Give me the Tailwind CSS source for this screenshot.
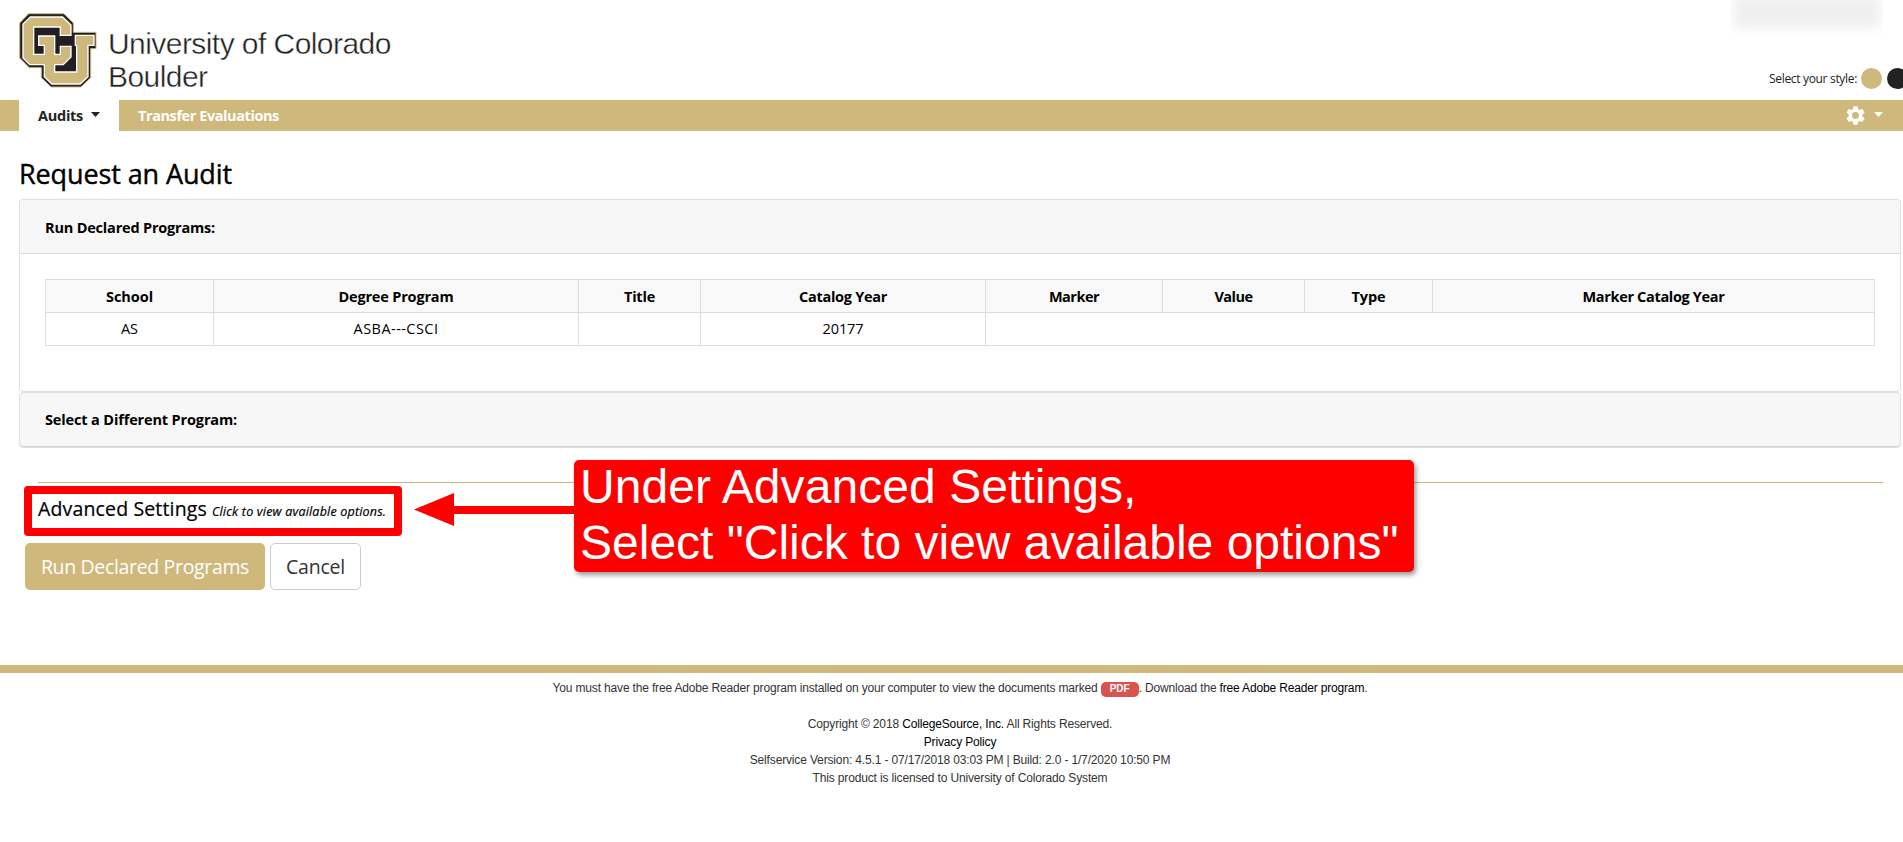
<!DOCTYPE html>
<html lang="en">
<head>
<meta charset="utf-8">
<title>Request an Audit</title>
<script src="https://cdn.jsdelivr.net/npm/@tailwindcss/browser@4"></script>
</head>
<body class="relative h-[842px] overflow-hidden bg-white font-['Open_Sans','Noto_Sans',sans-serif] text-black">
<header class="flex h-[100px] justify-between overflow-hidden pl-[19px]">
  <div class="flex pt-[13px]">
    <svg class="h-[75px] w-[78px]" viewBox="57 39 234 225">
      <path d="M86 41H192L220 69V97H288V146H272V233L243 261H153L124 233V203H88L59 174V69Z" fill="#231f20" stroke="#cfb87c" stroke-width="3"/>
      <g stroke="#ffffff" stroke-width="8" fill="#cfb87c">
        <path d="M92 53H187L211 76V104H183V79H99V165H135V134H118V110H162V165H183V141H211V170L189 192H90L71 173V73Z"/>
        <path d="M135 165H162V218H232V134H228V108H280V134H262V229L240 250H156L135 229Z"/>
      </g>
      <g fill="#cfb87c"><path d="M92 53H187L211 76V104H183V79H99V165H135V134H118V110H162V165H183V141H211V170L189 192H90L71 173V73Z"/><path d="M135 165H162V218H232V134H228V108H280V134H262V229L240 250H156L135 229Z"/></g>
    </svg>
    <div class="pt-[14px] pl-[11px] font-['Liberation_Sans',sans-serif] text-[30px] leading-[33px] tracking-[-0.56px] text-[#231f20] [-webkit-text-stroke:0.4px_white]">
      <div>University of Colorado</div><div>Boulder</div>
    </div>
  </div>
  <div class="relative w-[173px]">
    <div class="h-9 w-[153px] overflow-hidden"><div class="-mt-1 ml-1 h-[32px] w-[146px] bg-[#efefef] blur-[6px]"></div></div>
    <div class="absolute top-[68px] left-[39px] flex w-[160px] items-center">
      <span class="w-[92px] text-xs leading-5 tracking-[-0.32px] whitespace-nowrap text-[#222]">Select your style:</span>
      <span class="size-[21px] shrink-0 rounded-full bg-[#cfb87c]"></span>
      <span class="ml-[5px] size-[21px] shrink-0 rounded-full bg-[#222]"></span>
    </div>
  </div>
</header>
<nav class="flex h-[31px] bg-[#cfb87c] pl-[19px] text-[14.5px] leading-[31px] font-bold">
  <div class="flex w-[100px] items-center bg-white pl-[19px] tracking-[-0.27px] text-[#222]"><span class="w-[45px]">Audits</span>
    <svg class="mb-[2px] ml-2 h-[5px] w-[9px]" viewBox="0 0 9 5"><path d="M0 0H9L4.500 5Z" fill="#222"/></svg></div>
  <div class="pl-[19px] tracking-[-0.42px] text-white">Transfer Evaluations</div>
  <div class="ml-auto flex items-center pr-5">
    <svg class="size-[23px]" viewBox="0 0 24 24" fill="#fff"><path d="M19.14 12.94c.04-.3.06-.61.06-.94s-.02-.64-.07-.94l2.030-1.580a.49.49 0 0 0 .12-.61l-1.920-3.320a.49.49 0 0 0-.59-.22l-2.390.96a7 7 0 0 0-1.620-.94l-.36-2.540A.48.48 0 0 0 13.920 2.400h-3.840a.48.48 0 0 0-.47.410l-.36 2.540c-.59.24-1.130.570-1.620.940l-2.390-.96a.49.49 0 0 0-.59.220L2.740 8.870a.48.48 0 0 0 .12.610l2.030 1.580c-.05.3-.09.63-.09.94s.02.64.07.94l-2.030 1.580a.49.49 0 0 0-.12.610l1.920 3.320c.12.22.37.29.59.22l2.390-.96c.5.38 1.030.7 1.620.94l.36 2.540c.05.24.24.41.48.41h3.840c.24 0 .44-.17.47-.41l.36-2.540c.59-.24 1.130-.56 1.620-.94l2.390.96c.22.08.47 0 .59-.22l1.920-3.320a.48.48 0 0 0-.12-.61zM12 15.600a3.600 3.600 0 1 1 0-7.200 3.600 3.600 0 0 1 0 7.200z"/></svg>
    <svg class="mb-[2px] ml-[7px] h-[5px] w-[9px]" viewBox="0 0 9 5"><path d="M0 0H9L4.500 5Z" fill="#fff"/></svg>
  </div>
</nav>
<main class="h-[534px] pt-[23px] pl-[19px]">
  <h1 class="h-[45px] text-[27px] leading-[40px] font-medium tracking-[-0.11px] [-webkit-text-stroke:0.4px_black]">Request an Audit</h1>
  <section class="h-[193px] w-[1882px] rounded border border-[#dfdfdf]">
    <h2 class="h-[54px] rounded-t border-b border-[#d8d8d8] bg-[#f7f7f7] pl-[25px] text-[14.5px] leading-[55px] font-bold tracking-[-0.19px]">Run Declared Programs:</h2>
    <table class="mt-[25px] ml-[25px] w-[1830px] table-fixed border-collapse text-center text-[14.5px] leading-5 [&_td]:border [&_td]:border-[#ddd] [&_th]:border [&_th]:border-[#ddd] [&_th]:pt-[2px]">
      <colgroup><col class="w-[168px]"><col class="w-[365px]"><col class="w-[122px]"><col class="w-[285px]"><col class="w-[177px]"><col class="w-[142px]"><col class="w-[128px]"><col></colgroup>
      <tr class="h-[33px] bg-[#f9f9f9]"><th class="tracking-[-0.06px]">School</th><th class="tracking-[-0.17px]">Degree Program</th><th class="tracking-[-0.22px]">Title</th><th class="tracking-[-0.28px]">Catalog Year</th><th class="tracking-[-0.5px]">Marker</th><th class="tracking-[-0.5px]">Value</th><th class="tracking-[-0.1px]">Type</th><th class="tracking-[-0.33px]">Marker Catalog Year</th></tr>
      <tr class="h-[33px]"><td>AS</td><td class="tracking-[0.45px]">ASBA---CSCI</td><td></td><td class="tracking-[-0.09px]">20177</td><td colspan="4"></td></tr>
    </table>
  </section>
  <section class="h-[56px] w-[1882px] rounded border border-[#dfdfdf]">
    <h2 class="h-[54px] rounded border-b border-[#d0d0d0] bg-[#f7f7f7] pl-[25px] text-[14.5px] leading-[54px] font-bold tracking-[-0.14px]">Select a Different Program:</h2>
  </section>
  <div class="mt-[34px] ml-[19px] h-[61px] w-[1845px] border-t border-[#cfb87c] pt-[12px]">
    <div class="flex items-baseline text-[19.5px] leading-[28px] [-webkit-text-stroke:0.2px_black]"><span class="tracking-[0.15px]">Advanced Settings</span><em class="ml-[5px] text-[12.5px] tracking-[0.2px]">Click to view available options.</em></div>
  </div>
  <div class="ml-[6px] flex gap-[5px] text-[19.5px]">
    <button class="h-[47px] w-[240px] rounded-[5px] bg-[#cfb87c] tracking-[-0.34px] text-white">Run Declared Programs</button>
    <button class="h-[47px] w-[91px] rounded-[5px] border border-[#ccc] bg-white tracking-[-0.22px] text-[#333]">Cancel</button>
  </div>
</main>
<footer class="border-t-8 border-[#cfb87c] pt-[6px] pl-[17px] text-center font-['Liberation_Sans',sans-serif] text-xs leading-[18px] tracking-[-0.15px] text-[#333]">
  <p class="mb-[18px] h-[18px] tracking-[-0.165px]">You must have the free Adobe Reader program installed on your computer to view the documents marked <span class="mt-[3px] inline-block h-[15px] w-[38px] rounded-[5px] bg-[#d9534f] align-top text-[10px] leading-[14px] font-bold tracking-normal text-white">PDF</span>. Download the <span class="text-black">free Adobe Reader program</span>.</p>
  <p>Copyright © 2018 <span class="text-black">CollegeSource, Inc.</span> All Rights Reserved.</p>
  <p class="text-black">Privacy Policy</p>
  <p>Selfservice Version: 4.5.1 - 07/17/2018 03:03 PM | Build: 2.0 - 1/7/2020 10:50 PM</p>
  <p>This product is licensed to University of Colorado System</p>
</footer>
<div class="absolute top-[486px] left-6 h-[50px] w-[378px] rounded border-8 border-[red]"></div>
<svg class="absolute top-[493px] left-[414px] h-[33px] w-[162px]" viewBox="0 0 162 33"><path d="M0 16.500L40 0V13H162V21H40V33Z" fill="red"/></svg>
<div class="absolute top-[460px] left-[574px] h-[112px] w-[840px] rounded-[5px] bg-[red] pl-[6px] font-['Liberation_Sans',sans-serif] text-[48px] leading-[56px] whitespace-nowrap text-white shadow-[2px_3px_5px_rgba(0,0,0,0.4)]">
  <div class="-mt-px tracking-[0.06px]">Under Advanced Settings,</div><div>Select "Click to view available options"</div>
</div>
</body>
</html>
